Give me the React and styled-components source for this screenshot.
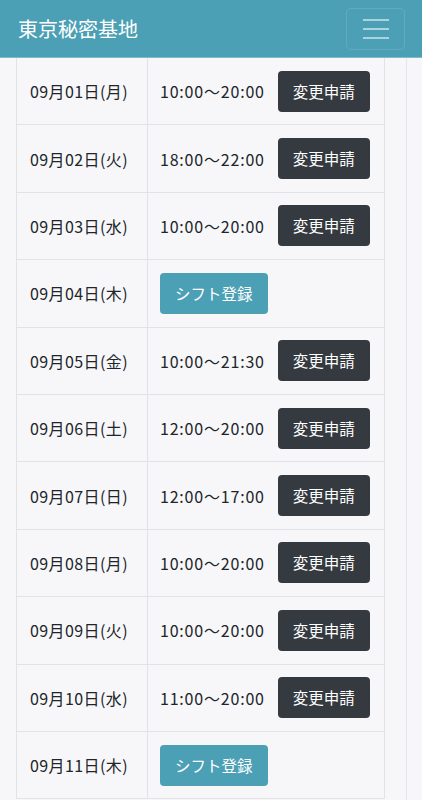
import styled, { createGlobalStyle } from "styled-components";

const GlobalStyle = createGlobalStyle`
  html, body {
    margin: 0;
    padding: 0;
    background: #f7f7f9;
    font-family: "Noto Sans CJK JP", "Noto Sans", sans-serif;
    color: #212529;
  }
`;

const Page = styled.div`
  width: 422px;
  height: 800px;
  overflow: hidden;
  background: #f7f7f9;
  display: flex;
  flex-direction: column;
`;

const Navbar = styled.header`
  height: 58px;
  flex-shrink: 0;
  background: #4ba0b5;
  border-bottom: 1px solid #7fbccb;
  box-sizing: border-box;
  display: flex;
  align-items: center;
  justify-content: space-between;
  padding: 0 18px 0 18px;
`;

const Brand = styled.div`
  color: #fff;
  font-size: 20px;
`;

const Toggler = styled.div`
  width: 59px;
  height: 42px;
  box-sizing: border-box;
  border: 1px solid rgba(255, 255, 255, 0.12);
  border-radius: 5px;
  margin-right: -1px;
  display: flex;
  flex-direction: column;
  justify-content: center;
  align-items: center;
  gap: 7px;
`;

const Bar = styled.span`
  display: block;
  width: 26px;
  height: 2px;
  background: rgba(255, 255, 255, 0.55);
`;

const Wrapper = styled.div`
  margin-left: 16px;
  width: 390px;
  border-right: 1px solid #e4e6ea;
  flex: 1;
  overflow: hidden;
`;

const Table = styled.table`
  width: 369px;
  border-collapse: collapse;
  margin-top: -1px;
`;

const Cell = styled.td`
  height: 67.4px;
  box-sizing: border-box;
  border: 1px solid #e1e3e6;
  padding: 0 0 0 ${(p) => p.$pl || 13}px;
  font-size: 16px;
  vertical-align: middle;
  white-space: nowrap;
`;

const DateCell = styled(Cell)`
  width: 131px;
  letter-spacing: 0.4px;
`;

const Time = styled.span`
  display: inline-block;
  margin-right: 13px;
  letter-spacing: 0.8px;
  vertical-align: middle;
`;

const Button = styled.span`
  display: inline-block;
  vertical-align: middle;
  box-sizing: border-box;
  height: 41px;
  line-height: 41px;
  padding: 0 15px;
  border-radius: 4px;
  color: #fff;
  font-size: 15.5px;
  letter-spacing: 0;
  background: ${(p) => (p.$variant === "info" ? "#4ba0b5" : "#343a40")};
`;

const shifts = [
  ["09月01日(月)", "10:00〜20:00"],
  ["09月02日(火)", "18:00〜22:00"],
  ["09月03日(水)", "10:00〜20:00"],
  ["09月04日(木)", null],
  ["09月05日(金)", "10:00〜21:30"],
  ["09月06日(土)", "12:00〜20:00"],
  ["09月07日(日)", "12:00〜17:00"],
  ["09月08日(月)", "10:00〜20:00"],
  ["09月09日(火)", "10:00〜20:00"],
  ["09月10日(水)", "11:00〜20:00"],
  ["09月11日(木)", null],
];

const App = () => {
  return (
    <Page>
      <GlobalStyle />
      <Navbar>
        <Brand>東京秘密基地</Brand>
        <Toggler>
          <Bar />
          <Bar />
          <Bar />
        </Toggler>
      </Navbar>
      <Wrapper>
        <Table>
          <tbody>
            {shifts.map(([date, time]) => (
              <tr key={date}>
                <DateCell>{date}</DateCell>
                <Cell $pl={12}>
                  {time ? (
                    <>
                      <Time>{time}</Time>
                      <Button>変更申請</Button>
                    </>
                  ) : (
                    <Button $variant="info">シフト登録</Button>
                  )}
                </Cell>
              </tr>
            ))}
          </tbody>
        </Table>
      </Wrapper>
    </Page>
  );
};

export default App;
